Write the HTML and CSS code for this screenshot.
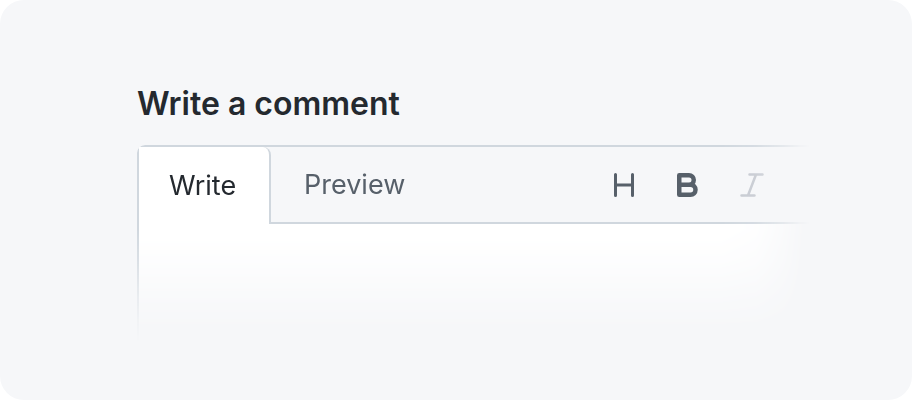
FILE: index.html
```html
<!DOCTYPE html>
<html lang="en">
<head>
    <meta charset="UTF-8">
    <title>Write a comment</title>
    <link rel="stylesheet" href="styles.css">
</head>
<body>
    <div class="card">
        <h2 class="title">Write a comment</h2>
        <div class="editor">
            <div class="editor-head">
                <div class="tab active">Write</div>
                <div class="tab">Preview</div>
                <div class="tools">
                    <svg class="tool" viewBox="0 0 24 24" width="24" height="24">
                        <path d="M2.5 1.5v21M19.5 1.5v21M2.5 12h17" fill="none" stroke="#57606a" stroke-width="3" stroke-linecap="round"/>
                    </svg>
                    <svg class="tool" viewBox="0 0 24 24" width="24" height="24">
                        <path d="M2.25 2.25H12a4.75 4.75 0 0 1 0 9.5H2.25zM2.25 11.75H13.5a5 5 0 0 1 0 10H2.25z" fill="none" stroke="#57606a" stroke-width="4.5" stroke-linejoin="round"/>
                    </svg>
                    <svg class="tool tool-off" viewBox="0 0 24 24" width="24" height="24">
                        <path d="M9.5 1.5h13M1.5 22.5h13M16 1.5l-8 21" fill="none" stroke="#c4c8cf" stroke-width="2.5" stroke-linecap="round"/>
                    </svg>
                </div>
            </div>
            <div class="editor-body"></div>
        </div>
    </div>
</body>
</html>
```

FILE: styles.css
```css
* {
    box-sizing: border-box;
}
body {
    margin: 0;
    background: #fff;
    font-family: Inter, "Noto Sans", sans-serif;
}
.card {
    width: 912px;
    height: 400px;
    border-radius: 24px;
    background: #f6f7f9;
    padding: 85px 0 0 137px;
    overflow: hidden;
}
.title {
    margin: 0 0 22px;
    font-size: 32px;
    line-height: 38px;
    font-weight: 600;
    color: #24292f;
}
.editor {
    width: 680px;
    height: 210px;
    border-top: 2px solid #d0d7de;
    border-left: 2px solid #d0d7de;
    border-top-left-radius: 8px;
    display: flex;
    flex-direction: column;
    -webkit-mask-image:
        linear-gradient(to right, #000 86%, rgba(0, 0, 0, 0.85) 91%, rgba(0, 0, 0, 0.45) 95%, rgba(0, 0, 0, 0.12) 97.5%, transparent 99%),
        linear-gradient(to bottom, #000 40%, rgba(0, 0, 0, 0.75) 55%, rgba(0, 0, 0, 0.35) 72%, rgba(0, 0, 0, 0.1) 85%, transparent 94%);
    -webkit-mask-composite: source-in;
    mask-image:
        linear-gradient(to right, #000 86%, rgba(0, 0, 0, 0.85) 91%, rgba(0, 0, 0, 0.45) 95%, rgba(0, 0, 0, 0.12) 97.5%, transparent 99%),
        linear-gradient(to bottom, #000 40%, rgba(0, 0, 0, 0.75) 55%, rgba(0, 0, 0, 0.35) 72%, rgba(0, 0, 0, 0.1) 85%, transparent 94%);
    mask-composite: intersect;
}
.editor-head {
    display: flex;
    align-items: stretch;
    height: 77px;
    border-bottom: 2px solid #d0d7de;
}
.tab {
    padding: 0 32px 0 33px;
    display: flex;
    align-items: center;
    font-size: 27px;
    color: #57606a;
}
.tab.active {
    background: #fff;
    color: #24292f;
    border-right: 2px solid #d0d7de;
    border-top-right-radius: 8px;
    margin-bottom: -2px;
    width: 132px;
    padding-left: 30px;
}
.tools {
    margin-left: auto;
    margin-right: 53px;
    display: flex;
    align-items: center;
    gap: 40px;
}
.tool {
    display: block;
}
.tool-off {
    margin-left: -1px;
}
.editor-body {
    flex: 1;
    background: #fff;
}
```
